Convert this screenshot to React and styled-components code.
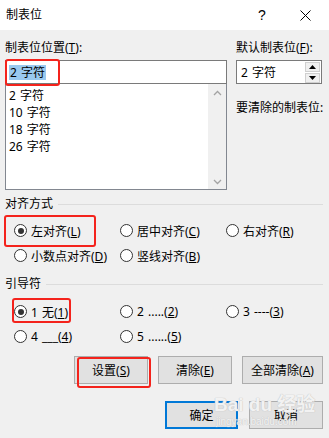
import React from "react";
import styled, { createGlobalStyle } from "styled-components";

const GlobalStyle = createGlobalStyle`
  html, body {
    margin: 0;
    padding: 0;
    background: #f0f0f0;
  }
  body {
    font-family: "Noto Sans", "Noto Sans CJK SC", sans-serif;
    font-size: 12px;
    color: #000;
  }
`;

const Window = styled.div`
  position: relative;
  width: 329px;
  height: 438px;
  background: #f0f0f0;
  overflow: hidden;
`;

const TitleBar = styled.div`
  height: 30px;
  background: #fff;
  display: flex;
  align-items: center;
  padding-left: 6px;
`;

const Title = styled.div`
  flex: 1;
  line-height: 16px;
`;

const Help = styled.div`
  width: 16px;
  text-align: center;
  font-size: 14px;
  margin-right: 30px;
  font-family: "Liberation Sans", sans-serif;
`;

const Close = styled.svg`
  width: 11px;
  height: 11px;
  margin-right: 18px;
`;

const Body = styled.div`
  padding: 10px 6px 0 5px;
`;

const TopGrid = styled.div`
  display: grid;
  grid-template-columns: 222px 86px;
  column-gap: 9px;
`;

const Label = styled.div`
  line-height: 16px;
  margin-top: ${(p) => p.$top || 0}px;
  margin-bottom: 4px;
  white-space: nowrap;
`;

const TextBox = styled.div`
  position: relative;
  height: 24px;
  box-sizing: border-box;
  border: 1px solid #7a7a7a;
  background: #fff;
  display: flex;
  align-items: center;
  padding-left: 3px;
  word-spacing: 1px;
`;

const Selected = styled.span`
  background: #99c9ef;
  line-height: 15px;
  padding: 0 1px;
`;

const RedMark = styled.div`
  position: absolute;
  left: ${(p) => p.$l}px;
  top: ${(p) => p.$t}px;
  width: ${(p) => p.$w}px;
  height: ${(p) => p.$h}px;
  box-sizing: border-box;
  border: 2.5px solid #f4231c;
  border-radius: 3px;
  pointer-events: none;
`;

const List = styled.div`
  height: 106px;
  box-sizing: border-box;
  border: 1px solid #828790;
  border-top: none;
  background: #fff;
  display: flex;
`;

const Items = styled.div`
  flex: 1;
  padding: 3px 0 0 3px;
  word-spacing: 1px;
`;

const Item = styled.div`
  line-height: 17px;
`;

const ScrollBar = styled.div`
  width: 18px;
  background: #f0f0f0;
  display: flex;
  flex-direction: column;
  justify-content: space-between;
  align-items: center;
  padding: 6px 0 4px;
  box-sizing: border-box;
`;

const SpinBox = styled(TextBox)`
  padding-left: 4px;
  padding-right: 1px;
  justify-content: space-between;
`;

const Spinner = styled.div`
  display: flex;
  flex-direction: column;
  gap: 1px;
`;

const SpinBtn = styled.div`
  width: 15px;
  height: 10px;
  background: #f0f0f0;
  border: 1px solid #d0d0d0;
  box-sizing: border-box;
  display: flex;
  align-items: center;
  justify-content: center;
`;

const Group = styled.div`
  margin-top: ${(p) => p.$top}px;
`;

const GroupHeader = styled.div`
  display: flex;
  align-items: center;
  gap: 5px;
  line-height: 16px;
  &::after {
    content: "";
    flex: 1;
    height: 1px;
    background: #dcdcdc;
  }
`;

const RadioGrid = styled.div`
  display: grid;
  grid-template-columns: repeat(3, 106px);
  grid-auto-rows: 25px;
  padding-left: 9px;
  margin-top: ${(p) => p.$top}px;
`;

const RadioItem = styled.div`
  position: relative;
  display: flex;
  align-items: center;
  gap: 4px;
  white-space: nowrap;
  word-spacing: 1px;
`;

const Circle = styled.span`
  width: 13px;
  height: 13px;
  box-sizing: border-box;
  border: 1px solid #333;
  border-radius: 50%;
  background: #fff;
  display: flex;
  align-items: center;
  justify-content: center;
  &::after {
    content: "";
    width: 6px;
    height: 6px;
    border-radius: 50%;
    background: ${(p) => (p.$checked ? "#333" : "transparent")};
  }
`;

const ButtonRow = styled.div`
  display: flex;
  justify-content: flex-end;
  gap: ${(p) => p.$gap}px;
  margin-top: ${(p) => p.$top}px;
`;

const Button = styled.div`
  position: relative;
  width: ${(p) => p.$w}px;
  height: 28px;
  box-sizing: border-box;
  background: #e1e1e1;
  border: ${(p) => (p.$default ? "2px solid #0078d7" : "1px solid #adadad")};
  display: flex;
  align-items: center;
  justify-content: center;
  white-space: nowrap;
`;

const Watermark = styled.div`
  position: absolute;
  left: 214px;
  top: 394px;
  color: rgba(255, 255, 255, 0.8);
  text-shadow: 0 0 1px #c4c4c4, 0 0 1px #c4c4c4;
  font-family: "Liberation Sans", "Noto Sans CJK SC", sans-serif;
  white-space: nowrap;
  pointer-events: none;
`;

const WmTop = styled.div`
  font-size: 19px;
  font-weight: bold;
  line-height: 22px;
`;

const WmBottom = styled.div`
  font-size: 10px;
  line-height: 12px;
  padding-left: 2px;
`;

const Chevron = ({ up }) => (
  <svg width="9" height="6" viewBox="0 0 9 6">
    <path
      d={up ? "M1 5 L4.5 1.5 L8 5" : "M1 1 L4.5 4.5 L8 1"}
      fill="none"
      stroke="#a3a3a3"
      strokeWidth="1.3"
    />
  </svg>
);

const Tri = ({ up }) => (
  <svg width="7" height="4" viewBox="0 0 7 4">
    <path d={up ? "M0 4 L3.5 0 L7 4 Z" : "M0 0 L3.5 4 L7 0 Z"} fill="#000" />
  </svg>
);

const Radio = ({ checked, children, mark }) => (
  <RadioItem>
    <Circle $checked={checked} />
    <span>{children}</span>
    {mark && <RedMark $l={mark[0]} $t={mark[1]} $w={mark[2]} $h={mark[3]} />}
  </RadioItem>
);

export default function App() {
  return (
    <Window>
      <GlobalStyle />
      <TitleBar>
        <Title>制表位</Title>
        <Help>?</Help>
        <Close viewBox="0 0 11 11">
          <path d="M0.5 0.5 L10.5 10.5 M10.5 0.5 L0.5 10.5" stroke="#000" strokeWidth="1" />
        </Close>
      </TitleBar>
      <Body>
        <TopGrid>
          <div>
            <Label>
              制表位位置(<u>T</u>):
            </Label>
            <TextBox>
              <Selected>2 字符</Selected>
              <RedMark $l={-1} $t={-2} $w={55} $h={27} />
            </TextBox>
            <List>
              <Items>
                <Item>2 字符</Item>
                <Item>10 字符</Item>
                <Item>18 字符</Item>
                <Item>26 字符</Item>
              </Items>
              <ScrollBar>
                <Chevron up />
                <Chevron />
              </ScrollBar>
            </List>
          </div>
          <div>
            <Label>
              默认制表位(<u>F</u>):
            </Label>
            <SpinBox>
              <span>2 字符</span>
              <Spinner>
                <SpinBtn>
                  <Tri up />
                </SpinBtn>
                <SpinBtn>
                  <Tri />
                </SpinBtn>
              </Spinner>
            </SpinBox>
            <Label $top={16}>要清除的制表位:</Label>
          </div>
        </TopGrid>

        <Group $top={6}>
          <GroupHeader>对齐方式</GroupHeader>
          <RadioGrid $top={6}>
            <Radio checked mark={[-10, -3, 92, 32]}>
              左对齐(<u>L</u>)
            </Radio>
            <Radio>
              居中对齐(<u>C</u>)
            </Radio>
            <Radio>
              右对齐(<u>R</u>)
            </Radio>
            <Radio>
              小数点对齐(<u>D</u>)
            </Radio>
            <Radio>
              竖线对齐(<u>B</u>)
            </Radio>
          </RadioGrid>
        </Group>

        <Group $top={8}>
          <GroupHeader>引导符</GroupHeader>
          <RadioGrid $top={7}>
            <Radio checked mark={[-2, -1, 59, 25]}>
              1 无(<u>1</u>)
            </Radio>
            <Radio>
              2 .....(<u>2</u>)
            </Radio>
            <Radio>
              3 ----(<u>3</u>)
            </Radio>
            <Radio>
              4 ___(<u>4</u>)
            </Radio>
            <Radio>
              5 ......(<u>5</u>)
            </Radio>
          </RadioGrid>
        </Group>

        <ButtonRow $gap={10} $top={7}>
          <Button $w={74}>
            设置(<u>S</u>)
            <RedMark $l={2} $t={0} $w={74} $h={31} />
          </Button>
          <Button $w={74}>
            清除(<u>E</u>)
          </Button>
          <Button $w={81}>
            全部清除(<u>A</u>)
          </Button>
        </ButtonRow>
        <ButtonRow $gap={11} $top={17}>
          <Button $w={73} $default>
            确定
          </Button>
          <Button $w={74}>取消</Button>
        </ButtonRow>
      </Body>
      <Watermark>
        <WmTop>Bai du 经验</WmTop>
        <WmBottom>jingyan.baidu.com</WmBottom>
      </Watermark>
    </Window>
  );
}
